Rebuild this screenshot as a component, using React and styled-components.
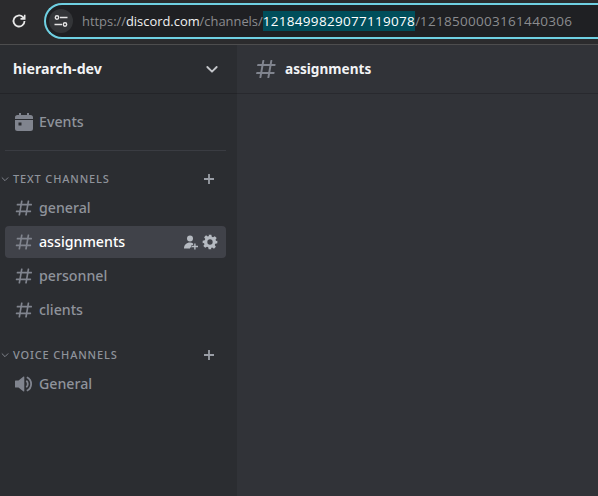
import React from 'react';
import styled, { createGlobalStyle } from 'styled-components';

const Global = createGlobalStyle`
  html, body { margin: 0; padding: 0; background: #2b2d31; }
  body { font-family: "Noto Sans", "Open Sans", sans-serif; overflow: hidden; }
`;

const Page = styled.div`
  width: 598px; height: 496px; display: flex; flex-direction: column; overflow: hidden;
`;
const Toolbar = styled.div`
  height: 45px; flex: none; display: flex; align-items: flex-start; background: #2b2b2d;
  border-bottom: 1px solid #4d4d4e; padding: 3px 0 0 10px; box-sizing: border-box;
`;
const Reload = styled.div`
  width: 18px; height: 18px; margin: 9px 16px 0 0; flex: none; display: flex; color: #e8e8e8;
`;
const Omnibox = styled.div`
  flex: none; width: 600px; height: 36px; box-sizing: border-box; border: 2px solid #6fd0e2; border-right: none;
  border-radius: 18px 0 0 18px; background: #1f2023; display: flex; align-items: center; padding-left: 3px;
`;
const SiteChip = styled.div`
  width: 24px; height: 24px; border-radius: 50%; background: #333538; color: #e4e4e4; display: flex;
  align-items: center; justify-content: center; margin-right: 9px; flex: none;
`;
const Url = styled.div`
  font-family: "Open Sans", sans-serif; font-size: 12.9px; color: #8b8c8f; white-space: nowrap;
`;
const Host = styled.span` color: #f1f1f1; `;
const Digits = styled.span` font-size: 13.5px; letter-spacing: 0.3px; `;
const Sel = styled(Digits)` background: #004e5b; color: #fff; display: inline-block; line-height: 20px; `;
const Body = styled.div` flex: 1; display: flex; min-height: 0; `;
const Sidebar = styled.aside`
  width: 237px; flex: none; background: #2b2d31; display: flex; flex-direction: column;
`;
const Main = styled.main` flex: 1; background: #313338; display: flex; flex-direction: column; `;
const ServerHead = styled.header`
  height: 49px; flex: none; box-sizing: border-box; display: flex; align-items: center; justify-content: space-between;
  padding: 0 17px 1px 13px; border-bottom: 1px solid #232428; color: #f2f3f5; font-size: 14.2px; font-weight: 700;
`;
const ChannelHead = styled.header`
  height: 49px; flex: none; box-sizing: border-box; display: flex; align-items: center; gap: 7px;
  padding: 0 0 1px 17px; border-bottom: 1px solid #28292e; color: #f2f3f5; font-size: 13.6px; font-weight: 700;
`;
const List = styled.div` flex: 1; padding: 12px 11px 0 5px; display: flex; flex-direction: column; `;
const Row = styled.div`
  height: 32px; margin-bottom: 2px; flex: none; display: flex; align-items: center; gap: 5px; padding: 0 8px 0 9px;
  border-radius: 4px; font-size: 14.2px; font-weight: 500;
  color: ${p => (p.$active ? '#ffffff' : '#8f939b')};
  background: ${p => (p.$active ? '#404249' : 'transparent')};
`;
const Name = styled.span` flex: 1; line-height: 20px; `;
const Divider = styled.div` height: 1px; background: #3a3c42; margin: 10px 0 0; flex: none; `;
const Category = styled.div`
  height: 16px; display: flex; align-items: center; margin: ${p => p.$mt}px 0 5px -5px; padding-right: 11px;
  color: #8f939b; font-size: 11px; font-weight: 500; letter-spacing: 0.85px; text-transform: uppercase;
`;
const CatLabel = styled.span` flex: 1; margin-left: 3px; padding-bottom: 2px; `;

const Actions = styled.div` display: flex; align-items: center; gap: 3px; color: #b5bac1; `;

const Hash = ({ size = 20, color = '#80848e' }) => (
  <svg width={size} height={size} viewBox="0 0 24 24" fill={color} style={{ flex: 'none' }}>
    <path d="M5.887 21a.5.5 0 0 1-.493-.582L6 17H2.612a.5.5 0 0 1-.492-.588l.177-1A.5.5 0 0 1 2.79 15h3.562l1.05-6H3.612a.5.5 0 0 1-.493-.588l.177-1A.5.5 0 0 1 3.79 7h3.96l.638-3.582A.5.5 0 0 1 8.88 3h1a.5.5 0 0 1 .492.588L9.77 7h5.96l.638-3.582A.5.5 0 0 1 16.86 3h1a.5.5 0 0 1 .492.588L17.75 7h3.388a.5.5 0 0 1 .492.588l-.177 1a.5.5 0 0 1-.492.412H17.4l-1.05 6h3.788a.5.5 0 0 1 .492.588l-.177 1a.5.5 0 0 1-.492.412H16l-.638 3.582a.5.5 0 0 1-.492.418h-1a.5.5 0 0 1-.492-.588L14 17H8l-.638 3.582a.5.5 0 0 1-.492.418H5.887ZM9.4 9l-1.05 6h6l1.05-6h-6Z" />
  </svg>
);
const Chevron = ({ size, color, width = 2 }) => (
  <svg width={size} height={size} viewBox="0 0 24 24" fill="none" stroke={color} strokeWidth={width} strokeLinecap="round" strokeLinejoin="round" style={{ flex: 'none' }}>
    <path d="M5 9l7 7 7-7" />
  </svg>
);
const Plus = ({ color = '#9a9ea6' }) => (
  <svg width="12" height="12" viewBox="0 0 12 12" stroke={color} strokeWidth="1.8" style={{ flex: 'none' }}>
    <path d="M6 1v10M1 6h10" />
  </svg>
);
const CalendarIcon = () => (
  <svg width="20" height="20" viewBox="0 0 20 20" fill="#80848e" style={{ flex: 'none' }}>
    <path d="M5 1h2v2h6V1h2v2h1.500A2.500 2.500 0 0 1 19 5.500V7H1V5.500A2.500 2.500 0 0 1 3.500 3H5V1Z" />
    <path fillRule="evenodd" d="M1 8h18v8.500a2.500 2.500 0 0 1-2.500 2.500h-13A2.500 2.500 0 0 1 1 16.500V8Zm3.500 2.500v3h3v-3h-3Z" />
  </svg>
);
const SpeakerIcon = () => (
  <svg width="20" height="20" viewBox="0 0 20 20" style={{ flex: 'none' }}>
    <path fill="#80848e" d="M9.500 2.500 4.500 6.500H1.500A.5.500 0 0 0 1 7v6a.5.500 0 0 0 .5.500h3l5 4a.5.500 0 0 0 .8-.4V2.900a.5.500 0 0 0-.8-.4Z" />
    <path fill="none" stroke="#80848e" strokeWidth="1.800" d="M12.300 6.800a4.200 4.200 0 0 1 0 6.400M12.800 3.200a7.500 7.500 0 0 1 0 13.600" />
  </svg>
);
const InviteIcon = () => (
  <svg width="16" height="16" viewBox="0 0 16 16" fill="#b5bac1" style={{ flex: 'none' }}>
    <circle cx="7" cy="4.500" r="3" />
    <path d="M1 14.500c0-3.500 2.500-6 6-6 1.200 0 2.300.3 3.100.9v1.600H8.500v2.500H7v1H1Z" />
    <path d="M11.200 9.500h1.400v2.300H15v1.400h-2.400v2.300h-1.400v-2.300H9v-1.400h2.200V9.500Z" />
  </svg>
);
const GearIcon = () => (
  <svg width="16" height="16" viewBox="0 0 24 24" fill="#b5bac1" style={{ flex: 'none' }}>
    <path fillRule="evenodd" d="M10 1h4l.7 3.100 1.800.8 2.700-1.700 2.800 2.800-1.700 2.700.8 1.800L23 10v4l-3.100.7-.8 1.800 1.700 2.700-2.800 2.800-2.700-1.700-1.800.8L14 23h-4l-.7-3.100-1.800-.8-2.700 1.700-2.800-2.800 1.700-2.700-.8-1.800L1 14v-4l3.100-.7.8-1.800-1.700-2.700 2.800-2.800 2.700 1.700 1.800-.8L10 1Zm2 7a4 4 0 1 0 0 8 4 4 0 0 0 0-8Z" />
  </svg>
);
const ReloadIcon = () => (
  <svg width="18" height="18" viewBox="0 0 18 18" fill="none" stroke="currentColor" strokeWidth="1.800">
    <path d="M14.500 9a5.500 5.500 0 1 1-1.700-4l1.700 1.500" />
    <path d="M14.700 2.700v4.200H10.500" strokeWidth="1.600" />
  </svg>
);
const TuneIcon = () => (
  <svg width="14" height="14" viewBox="0 0 14 14" fill="none" stroke="currentColor" strokeWidth="1.400">
    <circle cx="3" cy="3.500" r="1.700" />
    <path d="M6 3.500h7.500M.5 10.500H8" />
    <circle cx="11" cy="10.500" r="1.700" />
  </svg>
);

export default function App() {
  return (
    <Page>
      <Global />
      <Toolbar>
        <Reload><ReloadIcon /></Reload>
        <Omnibox>
          <SiteChip><TuneIcon /></SiteChip>
          <Url>https://<Host>discord.com</Host>/channels/<Sel>1218499829077119078</Sel>/<Digits>1218500003161440306</Digits></Url>
        </Omnibox>
      </Toolbar>
      <Body>
        <Sidebar>
          <ServerHead>
            <span>hierarch-dev</span>
            <Chevron size={16} color="#c4c6ca" width={2.800} />
          </ServerHead>
          <List>
            <Row><CalendarIcon /><Name>Events</Name></Row>
            <Divider />
            <Category $mt={20}><Chevron size={10} color="#8f939b" /><CatLabel>Text Channels</CatLabel><Plus /></Category>
            <Row><Hash /><Name>general</Name></Row>
            <Row $active><Hash /><Name>assignments</Name>
              <Actions><InviteIcon /><GearIcon /></Actions>
            </Row>
            <Row><Hash /><Name>personnel</Name></Row>
            <Row><Hash /><Name>clients</Name></Row>
            <Category $mt={19}><Chevron size={10} color="#8f939b" /><CatLabel>Voice Channels</CatLabel><Plus /></Category>
            <Row><SpeakerIcon /><Name>General</Name></Row>
          </List>
        </Sidebar>
        <Main>
          <ChannelHead><Hash size={24} /><span>assignments</span></ChannelHead>
        </Main>
      </Body>
    </Page>
  );
}
